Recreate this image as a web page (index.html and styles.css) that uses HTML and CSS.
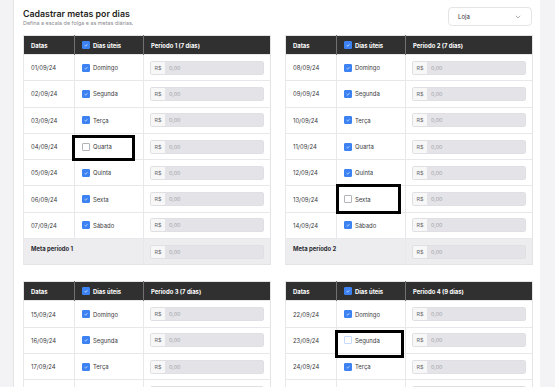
FILE: index.html
```html
<!DOCTYPE html>
<html lang="pt-BR">
<head>
<meta charset="UTF-8" />
<meta name="viewport" content="width=device-width, initial-scale=1" />
<title>Cadastrar metas por dias</title>
<link rel="stylesheet" href="styles.css">
</head>
<body>

<div class="painel">
  <div class="cabecalho">
    <div>
      <h1 class="titulo">Cadastrar metas por dias</h1>
      <p class="subtitulo">Defina a escala de folga e as metas diárias.</p>
    </div>
    <div class="seletor">
      <span>Loja</span>
      <svg width="6" height="4" viewBox="0 0 6 4"><polyline points="0.8,0.8 3,3 5.2,0.8" fill="none" stroke="#9a9aa0" stroke-width="0.8"/></svg>
    </div>
  </div>

  <div class="grade-periodos">

    <!-- Período 1 -->
    <table class="tabela-periodo">
      <colgroup><col class="col-data"><col class="col-dia"><col class="col-meta"></colgroup>
      <thead>
        <tr>
          <th>Datas</th>
          <th><span class="rotulo"><span class="caixa marcada"><svg viewBox="0 0 8 8"><polyline points="2.2,4.4 3.5,5.5 5.8,3"/></svg></span>Dias úteis</span></th>
          <th>Período 1 (7 dias)</th>
        </tr>
      </thead>
      <tbody>
        <tr><td>01/09/24</td><td><span class="rotulo"><span class="caixa marcada"><svg viewBox="0 0 8 8"><polyline points="2.2,4.4 3.5,5.5 5.8,3"/></svg></span>Domingo</span></td><td class="celula-meta"><div class="campo"><span class="moeda">R$</span><span class="valor">0,00</span></div></td></tr>
        <tr><td>02/09/24</td><td><span class="rotulo"><span class="caixa marcada"><svg viewBox="0 0 8 8"><polyline points="2.2,4.4 3.5,5.5 5.8,3"/></svg></span>Segunda</span></td><td class="celula-meta"><div class="campo"><span class="moeda">R$</span><span class="valor">0,00</span></div></td></tr>
        <tr><td>03/09/24</td><td><span class="rotulo"><span class="caixa marcada"><svg viewBox="0 0 8 8"><polyline points="2.2,4.4 3.5,5.5 5.8,3"/></svg></span>Terça</span></td><td class="celula-meta"><div class="campo"><span class="moeda">R$</span><span class="valor">0,00</span></div></td></tr>
        <tr><td>04/09/24</td><td class="com-destaque"><span class="rotulo"><span class="caixa"></span>Quarta</span><span class="destaque destaque-1"></span></td><td class="celula-meta"><div class="campo"><span class="moeda">R$</span><span class="valor">0,00</span></div></td></tr>
        <tr><td>05/09/24</td><td><span class="rotulo"><span class="caixa marcada"><svg viewBox="0 0 8 8"><polyline points="2.2,4.4 3.5,5.5 5.8,3"/></svg></span>Quinta</span></td><td class="celula-meta"><div class="campo"><span class="moeda">R$</span><span class="valor">0,00</span></div></td></tr>
        <tr><td>06/09/24</td><td><span class="rotulo"><span class="caixa marcada"><svg viewBox="0 0 8 8"><polyline points="2.2,4.4 3.5,5.5 5.8,3"/></svg></span>Sexta</span></td><td class="celula-meta"><div class="campo"><span class="moeda">R$</span><span class="valor">0,00</span></div></td></tr>
        <tr><td>07/09/24</td><td><span class="rotulo"><span class="caixa marcada"><svg viewBox="0 0 8 8"><polyline points="2.2,4.4 3.5,5.5 5.8,3"/></svg></span>Sábado</span></td><td class="celula-meta"><div class="campo"><span class="moeda">R$</span><span class="valor">0,00</span></div></td></tr>
      </tbody>
      <tfoot>
        <tr><td colspan="2" class="total">Meta período 1</td><td class="celula-meta"><div class="campo"><span class="moeda">R$</span><span class="valor">0,00</span></div></td></tr>
      </tfoot>
    </table>

    <!-- Período 2 -->
    <table class="tabela-periodo">
      <colgroup><col class="col-data"><col class="col-dia"><col class="col-meta"></colgroup>
      <thead>
        <tr>
          <th>Datas</th>
          <th><span class="rotulo"><span class="caixa marcada"><svg viewBox="0 0 8 8"><polyline points="2.2,4.4 3.5,5.5 5.8,3"/></svg></span>Dias úteis</span></th>
          <th>Período 2 (7 dias)</th>
        </tr>
      </thead>
      <tbody>
        <tr><td>08/09/24</td><td><span class="rotulo"><span class="caixa marcada"><svg viewBox="0 0 8 8"><polyline points="2.2,4.4 3.5,5.5 5.8,3"/></svg></span>Domingo</span></td><td class="celula-meta"><div class="campo"><span class="moeda">R$</span><span class="valor">0,00</span></div></td></tr>
        <tr><td>09/09/24</td><td><span class="rotulo"><span class="caixa marcada"><svg viewBox="0 0 8 8"><polyline points="2.2,4.4 3.5,5.5 5.8,3"/></svg></span>Segunda</span></td><td class="celula-meta"><div class="campo"><span class="moeda">R$</span><span class="valor">0,00</span></div></td></tr>
        <tr><td>10/09/24</td><td><span class="rotulo"><span class="caixa marcada"><svg viewBox="0 0 8 8"><polyline points="2.2,4.4 3.5,5.5 5.8,3"/></svg></span>Terça</span></td><td class="celula-meta"><div class="campo"><span class="moeda">R$</span><span class="valor">0,00</span></div></td></tr>
        <tr><td>11/09/24</td><td><span class="rotulo"><span class="caixa marcada"><svg viewBox="0 0 8 8"><polyline points="2.2,4.4 3.5,5.5 5.8,3"/></svg></span>Quarta</span></td><td class="celula-meta"><div class="campo"><span class="moeda">R$</span><span class="valor">0,00</span></div></td></tr>
        <tr><td>12/09/24</td><td><span class="rotulo"><span class="caixa marcada"><svg viewBox="0 0 8 8"><polyline points="2.2,4.4 3.5,5.5 5.8,3"/></svg></span>Quinta</span></td><td class="celula-meta"><div class="campo"><span class="moeda">R$</span><span class="valor">0,00</span></div></td></tr>
        <tr><td>13/09/24</td><td class="com-destaque"><span class="rotulo"><span class="caixa"></span>Sexta</span><span class="destaque destaque-2"></span></td><td class="celula-meta"><div class="campo"><span class="moeda">R$</span><span class="valor">0,00</span></div></td></tr>
        <tr><td>14/09/24</td><td><span class="rotulo"><span class="caixa marcada"><svg viewBox="0 0 8 8"><polyline points="2.2,4.4 3.5,5.5 5.8,3"/></svg></span>Sábado</span></td><td class="celula-meta"><div class="campo"><span class="moeda">R$</span><span class="valor">0,00</span></div></td></tr>
      </tbody>
      <tfoot>
        <tr><td colspan="2" class="total">Meta período 2</td><td class="celula-meta"><div class="campo"><span class="moeda">R$</span><span class="valor">0,00</span></div></td></tr>
      </tfoot>
    </table>

    <!-- Período 3 -->
    <table class="tabela-periodo">
      <colgroup><col class="col-data"><col class="col-dia"><col class="col-meta"></colgroup>
      <thead>
        <tr>
          <th>Datas</th>
          <th><span class="rotulo"><span class="caixa marcada"><svg viewBox="0 0 8 8"><polyline points="2.2,4.4 3.5,5.5 5.8,3"/></svg></span>Dias úteis</span></th>
          <th>Período 3 (7 dias)</th>
        </tr>
      </thead>
      <tbody>
        <tr><td>15/09/24</td><td><span class="rotulo"><span class="caixa marcada"><svg viewBox="0 0 8 8"><polyline points="2.2,4.4 3.5,5.5 5.8,3"/></svg></span>Domingo</span></td><td class="celula-meta"><div class="campo"><span class="moeda">R$</span><span class="valor">0,00</span></div></td></tr>
        <tr><td>16/09/24</td><td><span class="rotulo"><span class="caixa marcada"><svg viewBox="0 0 8 8"><polyline points="2.2,4.4 3.5,5.5 5.8,3"/></svg></span>Segunda</span></td><td class="celula-meta"><div class="campo"><span class="moeda">R$</span><span class="valor">0,00</span></div></td></tr>
        <tr><td>17/09/24</td><td><span class="rotulo"><span class="caixa marcada"><svg viewBox="0 0 8 8"><polyline points="2.2,4.4 3.5,5.5 5.8,3"/></svg></span>Terça</span></td><td class="celula-meta"><div class="campo"><span class="moeda">R$</span><span class="valor">0,00</span></div></td></tr>
        <tr><td>18/09/24</td><td><span class="rotulo"><span class="caixa marcada"><svg viewBox="0 0 8 8"><polyline points="2.2,4.4 3.5,5.5 5.8,3"/></svg></span>Quarta</span></td><td class="celula-meta"><div class="campo"><span class="moeda">R$</span><span class="valor">0,00</span></div></td></tr>
      </tbody>
    </table>

    <!-- Período 4 -->
    <table class="tabela-periodo">
      <colgroup><col class="col-data"><col class="col-dia"><col class="col-meta"></colgroup>
      <thead>
        <tr>
          <th>Datas</th>
          <th><span class="rotulo"><span class="caixa marcada"><svg viewBox="0 0 8 8"><polyline points="2.2,4.4 3.5,5.5 5.8,3"/></svg></span>Dias úteis</span></th>
          <th>Período 4 (9 dias)</th>
        </tr>
      </thead>
      <tbody>
        <tr><td>22/09/24</td><td><span class="rotulo"><span class="caixa marcada"><svg viewBox="0 0 8 8"><polyline points="2.2,4.4 3.5,5.5 5.8,3"/></svg></span>Domingo</span></td><td class="celula-meta"><div class="campo"><span class="moeda">R$</span><span class="valor">0,00</span></div></td></tr>
        <tr><td>23/09/24</td><td class="com-destaque"><span class="rotulo"><span class="caixa em-foco"></span>Segunda</span><span class="destaque destaque-3"></span></td><td class="celula-meta"><div class="campo"><span class="moeda">R$</span><span class="valor">0,00</span></div></td></tr>
        <tr><td>24/09/24</td><td><span class="rotulo"><span class="caixa marcada"><svg viewBox="0 0 8 8"><polyline points="2.2,4.4 3.5,5.5 5.8,3"/></svg></span>Terça</span></td><td class="celula-meta"><div class="campo"><span class="moeda">R$</span><span class="valor">0,00</span></div></td></tr>
        <tr><td>25/09/24</td><td><span class="rotulo"><span class="caixa marcada"><svg viewBox="0 0 8 8"><polyline points="2.2,4.4 3.5,5.5 5.8,3"/></svg></span>Quarta</span></td><td class="celula-meta"><div class="campo"><span class="moeda">R$</span><span class="valor">0,00</span></div></td></tr>
      </tbody>
    </table>

  </div>
</div>

</body>
</html>
```

FILE: styles.css
```css
body {
  margin: 0;
  font-family: Inter, "Noto Sans", sans-serif;
  background: #f3f3f5;
  color: #333;
  height: 387px;
  overflow: hidden;
}

.painel {
  margin-left: 13px;
  width: 527px;
  min-height: 100vh;
  box-sizing: border-box;
  background: #fff;
  border-left: 1px solid #e4e4e7;
  padding: 7px 8px 0 9px;
}

/* CABEÇALHO */
.cabecalho {
  display: flex;
  justify-content: space-between;
  align-items: flex-start;
  margin-bottom: 8px;
}
.titulo {
  margin: 1px 0 0 0;
  font-size: 8.8px;
  line-height: 12px;
  font-weight: 600;
  color: #1f1f22;
}
.subtitulo {
  margin: 0;
  font-size: 5.4px;
  line-height: 7px;
  color: #8a8a90;
}
.seletor {
  width: 84px;
  height: 19px;
  box-sizing: border-box;
  border: 1px solid #e4e4e7;
  border-radius: 4px;
  padding: 0 10px 0 9px;
  display: flex;
  align-items: center;
  justify-content: space-between;
  font-size: 6px;
  color: #333;
}

/* GRADE DE PERÍODOS */
.grade-periodos {
  display: grid;
  grid-template-columns: 247px 247px;
  column-gap: 15px;
  row-gap: 16px;
  align-items: start;
}

.tabela-periodo {
  width: 247px;
  border-collapse: collapse;
  table-layout: fixed;
  border: 1px solid #e4e4e7;
  font-size: 5.9px;
}
.col-data { width: 51px; }
.col-dia { width: 69px; }
.col-meta { width: 127px; }

.tabela-periodo th {
  background: #303030;
  color: #fff;
  font-weight: 700;
  text-align: left;
  height: 18px;
  padding: 0 7px;
  border-left: 1px solid #707070;
}
.tabela-periodo th:first-child {
  border-left: none;
}

.tabela-periodo td {
  height: 25.3px;
  padding: 0 7px;
  border-top: 1px solid #e8e8eb;
  border-left: 1px solid #e8e8eb;
  color: #3a3a40;
}
.tabela-periodo td.celula-meta {
  padding: 0 6px;
}

.rotulo {
  display: flex;
  align-items: center;
  gap: 3px;
}

/* Checkbox desenhado */
.caixa {
  width: 8px;
  height: 8px;
  box-sizing: border-box;
  border: 1px solid #b4b4b8;
  border-radius: 1px;
  background: #fff;
  flex-shrink: 0;
  display: block;
}
.caixa.marcada {
  background: #3d82f2;
  border-color: #3d82f2;
}
.caixa.marcada svg {
  display: block;
  width: 6px;
  height: 6px;
}
.caixa.marcada polyline {
  fill: none;
  stroke: #fff;
  stroke-width: 0.9;
}
.caixa.em-foco {
  border: 1.5px solid #c7d9fb;
}

/* Campo R$ */
.campo {
  display: flex;
  height: 14px;
  box-sizing: border-box;
  border: 1px solid #e0e0e4;
  border-radius: 2px;
  overflow: hidden;
  font-size: 5.4px;
}
.moeda {
  width: 14px;
  background: #f7f7f8;
  color: #6a6a70;
  display: flex;
  align-items: center;
  justify-content: center;
}
.valor {
  flex: 1;
  background: #e4e4e8;
  color: #a0a0a6;
  display: flex;
  align-items: center;
  padding-left: 4px;
}

/* Linha de total */
.tabela-periodo tfoot td {
  background: #ededf0;
}
.tabela-periodo td.total {
  vertical-align: top;
  height: 19px;
  padding-top: 6px;
  font-weight: 700;
  color: #2a2a30;
}

/* Marcações sobre as células */
.com-destaque {
  position: relative;
}
.destaque {
  position: absolute;
  border: 3px solid #000;
  box-sizing: border-box;
}
.destaque-1 {
  left: -3px;
  top: 1px;
  width: 63px;
  height: 26px;
}
.destaque-2 {
  left: -1px;
  top: -2px;
  width: 65px;
  height: 30px;
}
.destaque-3 {
  left: -2px;
  top: 2px;
  width: 69px;
  height: 28px;
}
```
